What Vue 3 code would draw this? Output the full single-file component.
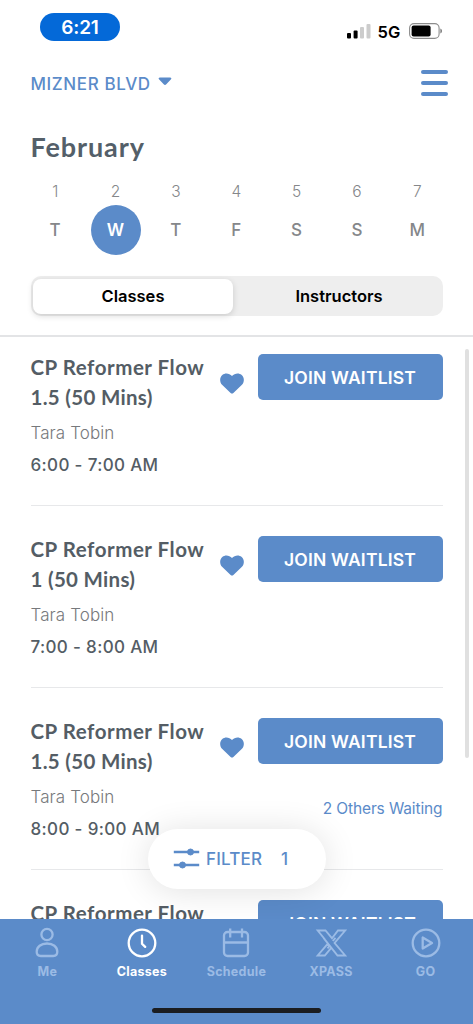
<script setup>
const days = [
  { n: 1, d: 'T' },
  { n: 2, d: 'W', active: true },
  { n: 3, d: 'T' },
  { n: 4, d: 'F' },
  { n: 5, d: 'S' },
  { n: 6, d: 'S' },
  { n: 7, d: 'M' },
]
const classes = [
  { id: 1, detail: '1.5 (50 Mins)', time: '6:00 - 7:00 AM' },
  { id: 2, detail: '1 (50 Mins)', time: '7:00 - 8:00 AM' },
  { id: 3, detail: '1.5 (50 Mins)', time: '8:00 - 9:00 AM', waiting: '2 Others Waiting' },
  { id: 4 },
]
</script>

<template>
  <div class="phone">
    <header class="header">
      <div class="status">
        <span class="clock">6:21</span>
        <div class="signals">
          <svg class="bars" width="24" height="16" viewBox="0 0 24 16">
            <rect x="0" y="10" width="4" height="5.5" rx="1" fill="#000" />
            <rect x="6.6" y="7.5" width="4" height="8" rx="1" fill="#000" />
            <rect x="13" y="4" width="4" height="11.5" rx="1" fill="#ccc" />
            <rect x="19.5" y="1" width="4" height="14.5" rx="1" fill="#ccc" />
          </svg>
          <span class="net">5G</span>
          <svg class="battery" width="34" height="16" viewBox="0 0 34 16">
            <rect x="0.6" y="0.6" width="29.5" height="14.8" rx="4.4" fill="#fff" stroke="#8c8c8c" stroke-width="1.1" />
            <rect x="2.6" y="2.6" width="19" height="10.8" rx="2" fill="#000" />
            <path d="M31.5 5.5c1.7.7 1.7 4.3 0 5z" fill="#555" />
          </svg>
        </div>
      </div>
      <div class="topbar">
        <div class="location">
          <span class="place">MIZNER BLVD</span>
          <svg width="14" height="9" viewBox="0 0 14 9"><path d="M2 .5h10c1.5 0 1.8 1 .8 2L8.300 7.300q-1.300 1.200-2.600 0L1.200 2.500C.2 1.500.5.500 2 .500z" fill="#5b8bc9" /></svg>
        </div>
        <div class="burger"><i></i><i></i><i></i></div>
      </div>
      <h1 class="month">February</h1>
      <div class="week">
        <div v-for="day in days" :key="day.n" class="day">
          <span class="num">{{ day.n }}</span>
          <span class="letter" :class="{ active: day.active }">{{ day.d }}</span>
        </div>
      </div>
      <div class="segment">
        <div class="seg on">Classes</div>
        <div class="seg off">Instructors</div>
      </div>
    </header>

    <main class="list">
      <article v-for="c in classes" :key="c.id" class="row">
        <div class="info">
          <h2 class="title">CP Reformer Flow</h2>
          <template v-if="c.detail">
            <h2 class="title detail">{{ c.detail }}</h2>
            <p class="teacher">Tara Tobin</p>
            <p class="time">{{ c.time }}</p>
          </template>
        </div>
        <svg class="heart" width="24" height="21" viewBox="0 0 24 21"><path d="M12 20.500Q11.300 20.500 10.600 19.900L2.300 12C-.8 8.800-.3 4.300 2.300 2 5.200-.5 9.400.1 12 3.100 14.600.1 18.800-.5 21.700 2c2.600 2.300 3.100 6.800 0 10l-8.300 7.900q-.7.600-1.400.600z" fill="#5b8bc9" /></svg>
        <div class="action">
          <button class="join">JOIN WAITLIST</button>
          <span v-if="c.waiting" class="waiting">{{ c.waiting }}</span>
        </div>
      </article>
      <div class="scrollbar"></div>
      <div class="filter">
        <svg width="27" height="22" viewBox="0 0 27 22" fill="#5b8bc9" stroke="#5b8bc9">
          <path d="M.8 4h25.400M.8 17h25.400" stroke-width="2.400" />
          <circle cx="17.500" cy="4" r="3" />
          <circle cx="9.500" cy="17" r="3" />
        </svg>
        <span class="ftext">FILTER</span>
        <span class="fcount">1</span>
      </div>
    </main>

    <nav class="nav">
      <div class="tab">
        <svg width="32" height="32" viewBox="0 0 32 32"><circle cx="16" cy="7.500" r="5.600" /><path d="M16 16.500c-6 0-10.300 3.300-10.300 8.300 0 2.700 1.400 4.200 4 4.200h12.600c2.600 0 4-1.500 4-4.200 0-5-4.300-8.300-10.300-8.300z" /></svg>
        <span>Me</span>
      </div>
      <div class="tab current">
        <svg width="32" height="32" viewBox="0 0 32 32"><circle cx="16" cy="16" r="13.300" /><path d="M16 8.600v8.100l3.200 3.200" stroke-linecap="round" /></svg>
        <span>Classes</span>
      </div>
      <div class="tab">
        <svg width="32" height="32" viewBox="0 0 32 32"><rect x="4" y="5" width="24" height="24" rx="3.500" /><path d="M4 15.500h24M10.200 1.500v9M22 1.500v9" /></svg>
        <span>Schedule</span>
      </div>
      <div class="tab">
        <svg width="32" height="32" viewBox="0 0 32 32" class="xicon"><path d="M10 12.500 2.700 3.500H10.500L17 11.300 23 3.500H30.200L19.600 16 30.200 28.500H22.500L8.500 10.800M20.500 10.800 17.800 14M13.500 15.800 2.700 28.500H9.800L15.800 21.300M12.500 21.300 15 18.300" /></svg>
        <span>XPASS</span>
      </div>
      <div class="tab">
        <svg width="32" height="32" viewBox="0 0 32 32"><circle cx="16" cy="16" r="13.300" /><path d="M12.700 10.500v11l9.300-5.500z" stroke-linejoin="round" /></svg>
        <span>GO</span>
      </div>
      <div class="home"></div>
    </nav>
  </div>
</template>

<style>
body { background: #fff; }
</style>

<style scoped>
* { box-sizing: border-box; }
.phone { width: 473px; height: 1024px; display: flex; flex-direction: column; background: #fff; font-family: Inter, "Liberation Sans", sans-serif; overflow: hidden; white-space: nowrap; }
.header { height: 337px; flex: none; border-bottom: 2px solid #e3e4e6; padding: 13px 30.500px 0 30.500px; }
.status { display: flex; justify-content: space-between; height: 28px; margin-left: 9.500px; }
.clock { width: 80px; height: 28px; border-radius: 14px; background: #0469d8; color: #fff; font-weight: 600; font-size: 19px; line-height: 29px; text-align: center; letter-spacing: -0.200px; }
.signals { display: flex; align-items: flex-start; }
.bars { margin-top: 10px; }
.net { font-size: 16.500px; font-weight: 600; line-height: 20px; margin: 9px 0 0 7px; width: 31px; }
.battery { margin-top: 10px; }
.topbar { display: flex; justify-content: space-between; height: 28px; margin-top: 28px; }
.location { display: flex; gap: 7px; color: #5b8bc9; }
.place { font-size: 17px; font-weight: 500; line-height: 30px; letter-spacing: 0.600px; width: 120.500px; }
.location svg { margin-top: 8px; }
.burger { width: 27px; margin-right: -5px; display: flex; flex-direction: column; gap: 7px; padding-top: 1px; }
.burger i { height: 4px; border-radius: 2px; background: #5b8bc9; }
.month { margin: 32px 0 0; font: 700 27px/36px Lato, sans-serif; color: #545f69; letter-spacing: 0.900px; }
.week { display: flex; margin: 17px -5px 0 -5.500px; }
.day { flex: 1; display: flex; flex-direction: column; align-items: center; color: #85878a; }
.num { font-size: 15.500px; line-height: 20px; height: 22.500px; font-weight: 300; }
.letter { width: 50px; height: 50px; border-radius: 50%; font-size: 17px; line-height: 50px; text-align: center; font-weight: 500; }
.letter.active { background: #5b8bc9; color: #fff; font-weight: 600; }
.segment { margin-top: 21.500px; height: 40px; border-radius: 10px; background: #eee; display: flex; padding: 2.500px; }
.seg { flex: 1; display: flex; justify-content: center; align-items: center; font-weight: 600; font-size: 16.500px; color: #000; }
.seg.on { flex: 0 0 200px; background: #fff; border-radius: 8px; box-shadow: 0 2px 6px rgba(0, 0, 0, .15); }
.seg.off { padding-left: 5px; }
.list { height: 582px; flex: none; position: relative; overflow: hidden; padding: 17px 30.500px 0 30.500px; display: flex; flex-direction: column; gap: 30px; }
.row { flex: none; height: 152px; border-bottom: 1px solid #e7e8ea; display: flex; align-items: flex-start; }
.info { width: 189px; }
.title { margin: -2px 0 0; font: 700 20.500px/30px Lato, sans-serif; color: #545d65; letter-spacing: 0.530px; }
.title.detail { margin: 0; letter-spacing: 0.300px; }
.teacher { margin: 6px 0 0; font-size: 17px; font-weight: 300; line-height: 31px; color: #77797c; letter-spacing: 0.100px; }
.time { margin: 0; font-size: 17px; font-weight: 500; line-height: 32px; color: #545d65; letter-spacing: 0.350px; }
.heart { margin-top: 18.500px; }
.action { margin-left: auto; width: 185px; display: flex; flex-direction: column; align-items: flex-end; }
.join { border: 0; width: 185px; height: 46px; border-radius: 5px; background: #5b8bc9; color: #fff; font-family: inherit; font-size: 17.500px; font-weight: 600; letter-spacing: 0.200px; padding: 0; }
.waiting { margin-top: 35px; font-size: 15.500px; line-height: 20px; color: #5b8bc9; letter-spacing: -0.120px; }
.scrollbar { position: absolute; right: 4px; top: 12px; width: 4px; height: 409px; border-radius: 2px; background: #e0e0e0; }
.filter { position: absolute; left: 148px; top: 492px; width: 178px; height: 60px; border-radius: 30px; background: #fff; box-shadow: 0 2px 34px rgba(0, 0, 0, .12); display: flex; align-items: center; padding-left: 25px; color: #5b8bc9; font-size: 17px; font-weight: 500; }
.ftext { margin-left: 6px; width: 75px; letter-spacing: 0.200px; }
.nav { height: 105px; flex: none; background: #5b8bc9; color: #9bbbe5; position: relative; display: flex; }
.tab { flex: 1; display: flex; flex-direction: column; align-items: center; padding-top: 8px; font-size: 12.500px; font-weight: 700; }
.tab svg { fill: none; stroke: currentColor; stroke-width: 2.300; }
.tab span { line-height: 20px; margin-top: 3px; letter-spacing: 0.300px; }
.tab .xicon { stroke-width: 1.900; }
.current { color: #fff; }
.home { position: absolute; left: 152px; top: 89px; width: 169px; height: 5px; border-radius: 3px; background: #1b1d20; }
</style>
